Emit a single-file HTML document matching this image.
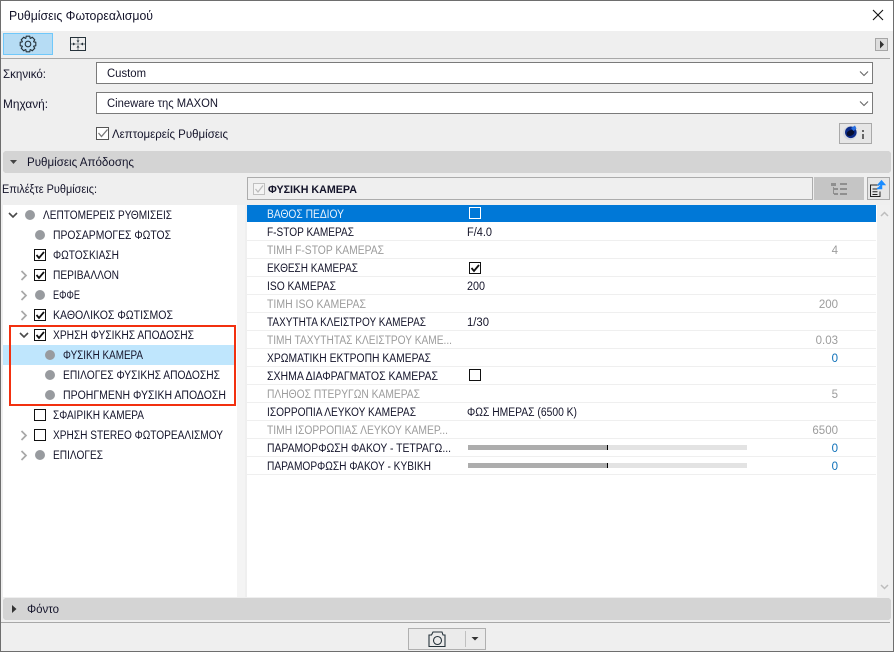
<!DOCTYPE html>
<html><head><meta charset="utf-8"><style>
html,body{margin:0;padding:0;width:894px;height:652px;overflow:hidden;background:#efefef}
svg{display:block}
text{font-family:"Liberation Sans",sans-serif;font-size:11.5px;fill:#14142a}
.g{fill:#9c9c9c}
</style></head><body>
<svg width="894" height="652" viewBox="0 0 894 652" xmlns="http://www.w3.org/2000/svg" shape-rendering="crispEdges">
<defs>
<g id="ck"><rect x="34.5" y="0.5" width="11" height="11" fill="#fff" stroke="#111"/><path d="M36.5 6l2.500 3 5-6" fill="none" stroke="#111" stroke-width="1.8" shape-rendering="auto"/></g>
<g id="uc"><rect x="34.5" y="0.5" width="11" height="11" fill="#fff" stroke="#111"/></g>
<path id="cr" d="M0 0l4.500 4.500-4.500 4.500" fill="none" stroke="#a8a8a8" stroke-width="1.7" shape-rendering="auto"/>
<path id="cd" d="M0 0l4 4 4-4" fill="none" stroke="#4a4a4a" stroke-width="1.6" shape-rendering="auto"/>
</defs>
<rect width="894" height="652" fill="#efefef"/>
<rect x="1" y="1" width="892" height="30" fill="#fff"/>
<text x="9" y="20" style="font-size:12.5px" textLength="144" lengthAdjust="spacingAndGlyphs">Ρυθμίσεις Φωτορεαλισμού</text>
<path d="M873 10l10 10M883 10l-10 10" stroke="#111" stroke-width="1.1" shape-rendering="auto"/>

<!-- toolbar -->
<rect x="3.500" y="33.500" width="49" height="21" fill="#b6dcf4" stroke="#70c8fa"/>
<g shape-rendering="auto" fill="none" stroke="#25323a" stroke-width="1.1" stroke-linejoin="round" transform="translate(28 44)">
<circle r="2.800"/>
<path d="M-1.800-7.800H1.800L2.100-5.800 2.600-5.600 4.200-6.800 6.800-4.200 5.600-2.600 5.800-2.100 7.800-1.800V1.800L5.800 2.100 5.600 2.600 6.800 4.200 4.200 6.800 2.600 5.600 2.100 5.800 1.800 7.800H-1.800L-2.100 5.800-2.600 5.600-4.200 6.800-6.800 4.200-5.600 2.600-5.800 2.100-7.800 1.800V-1.800L-5.800-2.100-5.600-2.600-6.800-4.200-4.200-6.800-2.600-5.600-2.100-5.800Z"/>
</g>
<rect x="70.500" y="37.500" width="15" height="13" fill="none" stroke="#25323a"/>
<path d="M78 38v3M78 47v3M71 44h2M83 44h2" stroke="#6b757b" stroke-width="1"/>
<path d="M73 44h10" stroke="#9aa2a6" stroke-width="1"/>
<path d="M78 41v6" stroke="#9aa2a6" stroke-width="1"/>
<path d="M73 42.500l2.500 1.500-2.500 1.500zM83 42.500l-2.500 1.500 2.500 1.500zM76.500 40.500h3l-1.500 2zM76.500 47.500h3l-1.500-2z" fill="#25323a" shape-rendering="auto"/>
<rect x="875.500" y="38.500" width="12" height="12" fill="#ddd" stroke="#a6a6a6"/>
<path d="M880 40.500l4 4-4 4z" fill="#333" shape-rendering="auto"/>
<rect x="1" y="58" width="889" height="1" fill="#a8a8a8"/>

<!-- dropdowns -->
<text x="3" y="78" textLength="43" lengthAdjust="spacingAndGlyphs">Σκηνικό:</text>
<text x="3" y="108" textLength="45" lengthAdjust="spacingAndGlyphs">Μηχανή:</text>
<rect x="96.500" y="62.500" width="776" height="21" fill="#fff" stroke="#7a7a7a"/>
<rect x="96.500" y="92.500" width="776" height="21" fill="#fff" stroke="#7a7a7a"/>
<text x="107" y="77" textLength="39" lengthAdjust="spacingAndGlyphs">Custom</text>
<text x="107" y="107" textLength="111" lengthAdjust="spacingAndGlyphs">Cineware της MAXON</text>
<path d="M860 71.500l4 4 4-4M860 101.500l4 4 4-4" fill="none" stroke="#666" stroke-width="1.1" shape-rendering="auto"/>
<rect x="96.500" y="127.500" width="12" height="12" fill="#fff" stroke="#555"/>
<path d="M98.500 133l3 3.500 6-7" fill="none" stroke="#777" stroke-width="1.3" shape-rendering="auto"/>
<text x="112" y="138" textLength="116" lengthAdjust="spacingAndGlyphs">Λεπτομερείς Ρυθμίσεις</text>
<rect x="839.500" y="123.500" width="32" height="20" fill="#e6e6e6" stroke="#a9a9a9"/>
<g shape-rendering="auto">
<circle cx="850" cy="133" r="7" fill="#d4d8e0"/>
<circle cx="850.800" cy="132.300" r="5.800" fill="#0b2a88"/>
<ellipse cx="850.500" cy="133" rx="4" ry="2.800" fill="#050d30" transform="rotate(-25 850.500 133)"/>
<path d="M851 128l4-2.500 1.500 3-3 2.500z" fill="#2a70e0"/>
</g>
<rect x="862" y="134" width="2" height="5" fill="#666"/><rect x="862" y="130" width="2" height="2" fill="#666"/>

<!-- section bar -->
<rect x="3" y="151" width="888" height="22" rx="3" fill="#d4d4d4"/>
<path d="M10 160h7l-3.500 4z" fill="#444" shape-rendering="auto"/>
<text x="27" y="166" textLength="107" lengthAdjust="spacingAndGlyphs">Ρυθμίσεις Απόδοσης</text>

<text x="2" y="193" textLength="95" lengthAdjust="spacingAndGlyphs">Επιλέξτε Ρυθμίσεις:</text>
<rect x="247.500" y="177.500" width="565" height="22" fill="#efefef" stroke="#acacac"/>
<rect x="253.500" y="183.500" width="11" height="11" fill="#f4f4f4" stroke="#c0c0c0"/>
<path d="M255.500 189l2.500 3 5-6.500" fill="none" stroke="#bbb" stroke-width="1.3" shape-rendering="auto"/>
<text x="268" y="193" style="font-weight:bold;font-size:11px" textLength="89" lengthAdjust="spacingAndGlyphs">ΦΥΣΙΚΗ ΚΑΜΕΡΑ</text>
<rect x="814" y="177" width="50" height="23" fill="#c5c5c5"/>
<path d="M831 183h5v3h-5zM840 183h7v2h-7zM840 188h7v2h-7zM840 193h7v2h-7zM833 187h1v7h-1zM834 188h4v2h-4zM834 193h4v2h-4z" fill="#8f8f8f"/>
<rect x="867.500" y="177.500" width="22" height="22" fill="#e6e6e6" stroke="#a9a9a9"/>
<path d="M879 185h-8.500v11.500h9.500v-5M872.500 189h5M872.500 191.800h5M872.500 194.500h5" fill="none" stroke="#222" stroke-width="1" shape-rendering="auto"/>
<path d="M877 188.500h4.500v-4.500M878.500 184.500l3-3.500 3 3.500z" fill="#1a8cff" stroke="#1a8cff" stroke-width="1.500" shape-rendering="auto"/>

<!-- tree -->
<rect x="3" y="205" width="234" height="392" fill="#fff"/>
<rect x="237" y="205" width="8" height="392" fill="#f4f4f4"/>
<rect x="3" y="345" width="231" height="20" fill="#bfe6fd"/>
<g shape-rendering="auto" fill="#989b9f">
<circle cx="30" cy="215" r="5"/><circle cx="40" cy="235" r="5"/><circle cx="40" cy="295" r="5"/>
<circle cx="50" cy="355" r="5"/><circle cx="50" cy="375" r="5"/><circle cx="50" cy="395" r="5"/><circle cx="40" cy="455" r="5"/>
</g>
<use href="#cd" x="9" y="213"/><use href="#cd" x="20" y="333"/>
<use href="#cr" x="21.500" y="271"/><use href="#cr" x="21.500" y="291"/><use href="#cr" x="21.500" y="311"/><use href="#cr" x="21.500" y="431"/><use href="#cr" x="21.500" y="451"/>
<use href="#ck" y="249"/><use href="#ck" y="269"/><use href="#ck" y="309"/><use href="#ck" y="329"/>
<use href="#uc" y="409"/><use href="#uc" y="429"/>
<text x="43" y="219" textLength="129" lengthAdjust="spacingAndGlyphs">ΛΕΠΤΟΜΕΡΕΙΣ ΡΥΘΜΙΣΕΙΣ</text>
<text x="53" y="239" textLength="118" lengthAdjust="spacingAndGlyphs">ΠΡΟΣΑΡΜΟΓΕΣ ΦΩΤΟΣ</text>
<text x="53" y="259" textLength="66" lengthAdjust="spacingAndGlyphs">ΦΩΤΟΣΚΙΑΣΗ</text>
<text x="53" y="279" textLength="66" lengthAdjust="spacingAndGlyphs">ΠΕΡΙΒΑΛΛΟΝ</text>
<text x="53" y="299" textLength="27" lengthAdjust="spacingAndGlyphs">ΕΦΦΕ</text>
<text x="53" y="319" textLength="120" lengthAdjust="spacingAndGlyphs">ΚΑΘΟΛΙΚΟΣ ΦΩΤΙΣΜΟΣ</text>
<text x="53" y="339" textLength="141" lengthAdjust="spacingAndGlyphs">ΧΡΗΣΗ ΦΥΣΙΚΗΣ ΑΠΟΔΟΣΗΣ</text>
<text x="63" y="359" textLength="80" lengthAdjust="spacingAndGlyphs">ΦΥΣΙΚΗ ΚΑΜΕΡΑ</text>
<text x="63" y="379" textLength="157" lengthAdjust="spacingAndGlyphs">ΕΠΙΛΟΓΕΣ ΦΥΣΙΚΗΣ ΑΠΟΔΟΣΗΣ</text>
<text x="63" y="399" textLength="163" lengthAdjust="spacingAndGlyphs">ΠΡΟΗΓΜΕΝΗ ΦΥΣΙΚΗ ΑΠΟΔΟΣΗ</text>
<text x="53" y="419" textLength="91" lengthAdjust="spacingAndGlyphs">ΣΦΑΙΡΙΚΗ ΚΑΜΕΡΑ</text>
<text x="53" y="439" textLength="170" lengthAdjust="spacingAndGlyphs">ΧΡΗΣΗ STEREO ΦΩΤΟΡΕΑΛΙΣΜΟΥ</text>
<text x="53" y="459" textLength="50" lengthAdjust="spacingAndGlyphs">ΕΠΙΛΟΓΕΣ</text>
<rect x="10" y="326" width="225" height="79" fill="none" stroke="#f2300f" stroke-width="2"/>

<!-- table -->
<rect x="247" y="205" width="630" height="392" fill="#fff"/>
<rect x="877" y="205" width="13" height="392" fill="#f0f0f0"/>
<path d="M881 216l3.500-3.500 3.500 3.500M881 585l3.500 3.500 3.500-3.500" fill="none" stroke="#bdbdbd" stroke-width="1.500" shape-rendering="auto"/>
<rect x="247" y="205" width="629" height="17" fill="#0078d7"/>
<g fill="#efefef">
<rect x="247" y="240" width="629" height="1"/><rect x="247" y="258" width="629" height="1"/><rect x="247" y="276" width="629" height="1"/><rect x="247" y="294" width="629" height="1"/><rect x="247" y="312" width="629" height="1"/><rect x="247" y="330" width="629" height="1"/><rect x="247" y="348" width="629" height="1"/><rect x="247" y="366" width="629" height="1"/><rect x="247" y="384" width="629" height="1"/><rect x="247" y="402" width="629" height="1"/><rect x="247" y="420" width="629" height="1"/><rect x="247" y="438" width="629" height="1"/><rect x="247" y="456" width="629" height="1"/><rect x="247" y="474" width="629" height="1"/>
</g>
<text x="267" y="218" style="fill:#e8f2fb" textLength="77" lengthAdjust="spacingAndGlyphs">ΒΑΘΟΣ ΠΕΔΙΟΥ</text>
<text x="267" y="236" textLength="87" lengthAdjust="spacingAndGlyphs">F-STOP ΚΑΜΕΡΑΣ</text>
<text x="267" y="254" class="g" textLength="117" lengthAdjust="spacingAndGlyphs">ΤΙΜΗ F-STOP ΚΑΜΕΡΑΣ</text>
<text x="267" y="272" textLength="91" lengthAdjust="spacingAndGlyphs">ΕΚΘΕΣΗ ΚΑΜΕΡΑΣ</text>
<text x="267" y="290" textLength="69" lengthAdjust="spacingAndGlyphs">ISO ΚΑΜΕΡΑΣ</text>
<text x="267" y="308" class="g" textLength="99" lengthAdjust="spacingAndGlyphs">ΤΙΜΗ ISO ΚΑΜΕΡΑΣ</text>
<text x="267" y="326" textLength="159" lengthAdjust="spacingAndGlyphs">ΤΑΧΥΤΗΤΑ ΚΛΕΙΣΤΡΟΥ ΚΑΜΕΡΑΣ</text>
<text x="267" y="344" class="g" textLength="185" lengthAdjust="spacingAndGlyphs">ΤΙΜΗ ΤΑΧΥΤΗΤΑΣ ΚΛΕΙΣΤΡΟΥ ΚΑΜΕ...</text>
<text x="267" y="362" textLength="164" lengthAdjust="spacingAndGlyphs">ΧΡΩΜΑΤΙΚΗ ΕΚΤΡΟΠΗ ΚΑΜΕΡΑΣ</text>
<text x="267" y="380" textLength="171" lengthAdjust="spacingAndGlyphs">ΣΧΗΜΑ ΔΙΑΦΡΑΓΜΑΤΟΣ ΚΑΜΕΡΑΣ</text>
<text x="267" y="398" class="g" textLength="153" lengthAdjust="spacingAndGlyphs">ΠΛΗΘΟΣ ΠΤΕΡΥΓΩΝ ΚΑΜΕΡΑΣ</text>
<text x="267" y="416" textLength="149" lengthAdjust="spacingAndGlyphs">ΙΣΟΡΡΟΠΙΑ ΛΕΥΚΟΥ ΚΑΜΕΡΑΣ</text>
<text x="267" y="434" class="g" textLength="181" lengthAdjust="spacingAndGlyphs">ΤΙΜΗ ΙΣΟΡΡΟΠΙΑΣ ΛΕΥΚΟΥ ΚΑΜΕΡ...</text>
<text x="267" y="452" textLength="184" lengthAdjust="spacingAndGlyphs">ΠΑΡΑΜΟΡΦΩΣΗ ΦΑΚΟΥ - ΤΕΤΡΑΓΩ...</text>
<text x="267" y="470" textLength="164" lengthAdjust="spacingAndGlyphs">ΠΑΡΑΜΟΡΦΩΣΗ ΦΑΚΟΥ - ΚΥΒΙΚΗ</text>

<rect x="469.500" y="207.500" width="11" height="11" fill="none" stroke="#fff"/>
<rect x="469.500" y="262.500" width="11" height="11" fill="#fff" stroke="#111"/>
<path d="M471.500 268l2.500 3 5-6" fill="none" stroke="#111" stroke-width="1.800" shape-rendering="auto"/>
<rect x="469.500" y="369.500" width="11" height="11" fill="#fff" stroke="#111"/>
<text x="467" y="236" textLength="25" lengthAdjust="spacingAndGlyphs">F/4.0</text>
<text x="467" y="290" textLength="18" lengthAdjust="spacingAndGlyphs">200</text>
<text x="467" y="326" textLength="22" lengthAdjust="spacingAndGlyphs">1/30</text>
<text x="467" y="416" textLength="110" lengthAdjust="spacingAndGlyphs">ΦΩΣ ΗΜΕΡΑΣ (6500 K)</text>

<text x="838" y="254" class="g" text-anchor="end">4</text>
<text x="838" y="308" class="g" text-anchor="end">200</text>
<text x="838" y="344" class="g" text-anchor="end">0.03</text>
<text x="838" y="362" text-anchor="end" style="fill:#0b6fb8">0</text>
<text x="838" y="398" class="g" text-anchor="end">5</text>
<text x="838" y="434" class="g" text-anchor="end">6500</text>
<text x="838" y="452" text-anchor="end" style="fill:#0b6fb8">0</text>
<text x="838" y="470" text-anchor="end" style="fill:#0b6fb8">0</text>

<rect x="468" y="445" width="279" height="5" fill="#e3e3e3"/>
<rect x="468" y="445" width="139" height="5" fill="#adadad"/>
<rect x="607" y="445" width="1" height="5" fill="#000"/>
<rect x="468" y="463" width="279" height="5" fill="#e3e3e3"/>
<rect x="468" y="463" width="139" height="5" fill="#adadad"/>
<rect x="607" y="463" width="1" height="5" fill="#000"/>

<!-- bottom -->
<rect x="3" y="598" width="888" height="22" rx="3" fill="#d4d4d4"/>
<path d="M12 605l4.500 4-4.500 4z" fill="#333" shape-rendering="auto"/>
<text x="27" y="613" textLength="32" lengthAdjust="spacingAndGlyphs">Φόντο</text>
<rect x="1" y="622" width="889" height="1" fill="#a8a8a8"/>
<rect x="408.500" y="628.500" width="77" height="21" fill="#ebebeb" stroke="#b0b0b0"/>
<g shape-rendering="auto" fill="none" stroke="#25323a" stroke-width="1.100">
<path d="M429 635h2.500l1.500-3h9l1 3h2v11.500h-16z"/><circle cx="437.500" cy="640.500" r="4"/>
</g>
<rect x="465" y="631" width="1" height="16" fill="#c0c0c0"/>
<path d="M471.500 637h7l-3.500 3.500z" fill="#333" shape-rendering="auto"/>

<!-- window border -->
<rect x="0.500" y="0.500" width="893" height="651" fill="none" stroke="#6e6e6e"/>
</svg>
</body></html>
